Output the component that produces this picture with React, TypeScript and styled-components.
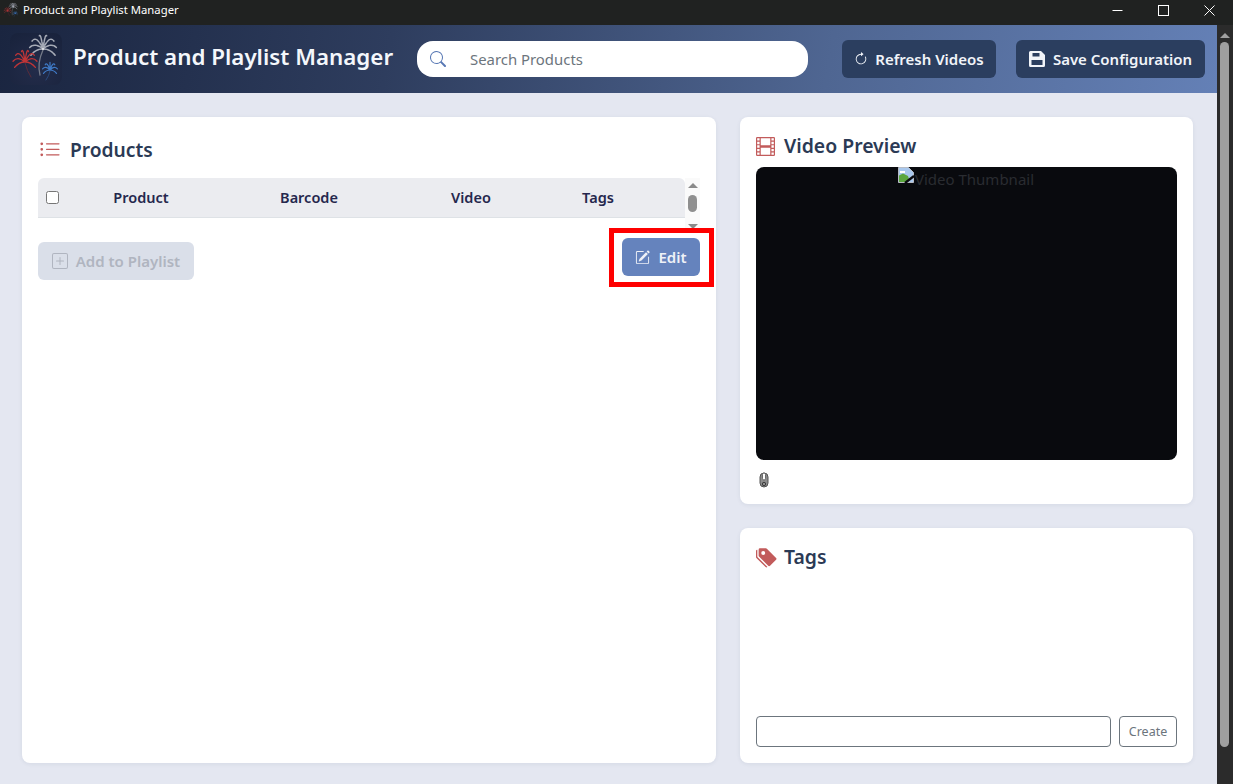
import { FC } from "react";
import styled, { createGlobalStyle } from "styled-components";
import {
  BsArrowClockwise,
  BsFilm,
  BsListUl,
  BsPencilSquare,
  BsPlusSquare,
  BsSearch,
  BsTagsFill,
} from "react-icons/bs";

const FONT = `"Noto Sans", "Open Sans", "Liberation Sans", sans-serif`;

const GlobalStyle = createGlobalStyle`
  html, body {
    margin: 0;
    padding: 0;
    height: 100%;
    overflow: hidden;
    background: #e4e7f1;
    font-family: ${FONT};
  }
  * {
    box-sizing: border-box;
  }
`;

const Window = styled.div`
  width: 1233px;
  height: 784px;
  display: flex;
  flex-direction: column;
  overflow: hidden;
`;

const TitleBar = styled.div`
  height: 25px;
  flex: none;
  background: #202221;
  display: flex;
  align-items: center;
  padding: 0 1px 5px 3px;
  color: #ffffff;
`;

const TitleText = styled.span`
  margin-left: 4px;
  font-size: 11.3px;
  line-height: 20px;
  flex: 1;
`;

const WindowButton = styled.div`
  width: 46px;
  height: 20px;
  display: flex;
  align-items: center;
  justify-content: center;
`;

const Body = styled.div`
  flex: 1;
  min-height: 0;
  display: flex;
`;

const Page = styled.div`
  width: 1217px;
  display: flex;
  flex-direction: column;
`;

const Header = styled.header`
  height: 68px;
  flex: none;
  background: linear-gradient(100deg, #1a2540 0%, #2e3d5e 32%, #4f6692 68%, #6480b6 100%);
  display: flex;
  align-items: center;
  padding: 0 12px 0 10px;
`;

const LogoBox = styled.div`
  width: 52px;
  height: 52px;
  flex: none;
  border-radius: 8px;
  background: radial-gradient(circle at 50% 70%, #232c4a, #18223b);
  display: flex;
  align-items: center;
  justify-content: center;
`;

const AppTitle = styled.h1`
  margin: 0 0 5px 11px;
  width: 344px;
  flex: none;
  font-size: 22.35px;
  font-weight: 600;
  color: #f4f7fb;
  white-space: nowrap;
`;

const SearchBox = styled.div`
  width: 391px;
  height: 36px;
  flex: none;
  border-radius: 16px;
  background: #ffffff;
  display: flex;
  align-items: center;
  padding-left: 13px;
  color: #5878b4;
`;

const SearchLabel = styled.span`
  margin-left: 24px;
  font-size: 14.9px;
  color: #6c757d;
`;

const HeaderButton = styled.button<{ $left: number; $width: number; $gap: number }>`
  margin-left: ${({ $left }) => $left}px;
  width: ${({ $width }) => $width}px;
  height: 38px;
  flex: none;
  border: none;
  border-radius: 6px;
  background: #2b3e5f;
  color: #f1f4f9;
  font-family: ${FONT};
  font-size: 15px;
  font-weight: 600;
  display: flex;
  align-items: center;
  justify-content: center;
  gap: ${({ $gap }) => $gap}px;
  padding: 0;
  white-space: nowrap;
`;

const Main = styled.main`
  flex: 1;
  min-height: 0;
  background: #e4e7f1;
  padding: 24px 24px 21px 22px;
  display: grid;
  grid-template-columns: 694px 453px;
  column-gap: 24px;
`;

const Card = styled.section`
  background: #ffffff;
  border-radius: 8px;
  box-shadow: 0 1px 4px rgba(44, 62, 95, 0.08);
  padding: 16px;
  min-height: 0;
`;

const ProductsCard = styled(Card)`
  padding-top: 20px;
`;

const SideColumn = styled.div`
  display: grid;
  grid-template-rows: 387px 235px;
  row-gap: 24px;
`;

const SectionTitle = styled.h2<{ $gap?: number }>`
  margin: 0;
  height: 26px;
  font-size: 19.4px;
  font-weight: 600;
  line-height: 26px;
  color: #2b3a55;
  display: flex;
  align-items: center;
  gap: ${({ $gap }) => $gap ?? 9}px;
  svg {
    color: #c25b5b;
    flex: none;
  }
`;

const ProductsTitle = styled(SectionTitle)`
  margin-left: 1px;
  font-size: 19.2px;
`;

const TableRow = styled.div`
  margin-top: 15px;
  display: flex;
  height: 54px;
`;

const TableHead = styled.div`
  width: 647px;
  height: 40px;
  background: #ebecf0;
  border-bottom: 1px solid #dee2e6;
  border-radius: 6px 6px 0 0;
  padding-bottom: 2px;
  display: grid;
  grid-template-columns: 57px 92px 244px 80px 174px;
  align-items: center;
  font-size: 14.5px;
  font-weight: 600;
  color: #25274d;
  text-align: center;
`;

const HeadCheck = styled.div`
  display: flex;
  padding: 2px 0 0 8px;
  input {
    margin: 0;
    width: 13px;
    height: 13px;
  }
`;

const ScrollColumn = styled.div`
  width: 15px;
  background: #fafafa;
  display: flex;
  flex-direction: column;
  align-items: center;
  justify-content: space-between;
  padding: 5px 0 3px;
`;

const ScrollThumb = styled.div`
  width: 9px;
  height: 17px;
  margin-bottom: 5px;
  border-radius: 5px;
  background: #8f8f8f;
`;

const Arrow = styled.div<{ $down?: boolean; $color: string }>`
  width: 0;
  height: 0;
  border-left: 5px solid transparent;
  border-right: 5px solid transparent;
  ${({ $down, $color }) =>
    $down ? `border-top: 5px solid ${$color};` : `border-bottom: 5px solid ${$color};`}
`;

const Actions = styled.div`
  display: flex;
  justify-content: space-between;
  align-items: flex-start;
  margin-top: 6px;
`;

const AddButton = styled.button`
  margin-top: 4px;
  width: 156px;
  height: 38px;
  border: none;
  border-radius: 6px;
  background: #dadfe9;
  color: #b0b5c0;
  font-family: ${FONT};
  font-size: 15px;
  font-weight: 600;
  display: flex;
  align-items: center;
  justify-content: center;
  gap: 8px;
  padding: 0;
`;

const EditButton = styled.button`
  position: relative;
  width: 78px;
  height: 38px;
  border: none;
  border-radius: 6px;
  background: #6583bd;
  color: #eef1f7;
  font-family: ${FONT};
  font-size: 15px;
  font-weight: 600;
  display: flex;
  align-items: center;
  justify-content: center;
  gap: 8px;
  padding: 0;
  &::after {
    content: "";
    position: absolute;
    left: -13px;
    right: -14px;
    top: -10px;
    bottom: -11px;
    border: 5px solid #fe0000;
  }
`;

const VideoFrame = styled.div`
  margin-top: 8px;
  height: 293px;
  border-radius: 8px;
  background: #090a0e;
  display: flex;
  justify-content: center;
  align-items: flex-start;
  font-size: 15px;
  line-height: 24px;
  color: #2a2c31;
`;

const BrokenImage = styled.svg`
  flex: none;
  margin: 0 1px 0 -1px;
`;

const ClipRow = styled.div`
  margin-top: 11px;
  margin-left: 3px;
  height: 18px;
`;

const TagsCard = styled(Card)`
  display: flex;
  flex-direction: column;
  padding-bottom: 16px;
`;

const TagsList = styled.div`
  flex: 1;
`;

const TagForm = styled.div`
  display: flex;
  gap: 8px;
`;

const TagInput = styled.input`
  width: 355px;
  height: 31px;
  border: 1px solid #6c757d;
  border-radius: 4px;
  background: #ffffff;
  padding: 0 8px;
`;

const CreateButton = styled.button`
  width: 58px;
  height: 31px;
  border: 1px solid #6c757d;
  border-radius: 4px;
  background: #ffffff;
  color: #6c757d;
  font-family: ${FONT};
  font-size: 12.5px;
  padding: 0;
`;

const WindowScrollbar = styled.div`
  width: 16px;
  background: #2b2b2b;
  padding: 8px 4px 0 3px;
  display: flex;
  flex-direction: column;
  align-items: center;
`;

const WindowThumb = styled.div`
  margin-top: 4px;
  width: 9px;
  height: 705px;
  border-radius: 5px;
  background: #9f9f9f;
`;

const rays = (cx: number, cy: number, len: number, n: number, from: number, to: number) =>
  Array.from({ length: n }, (_, i) => {
    const a = ((from + ((to - from) * i) / (n - 1)) * Math.PI) / 180;
    const ex = cx + Math.cos(a) * len;
    const ey = cy + Math.sin(a) * len * 0.9;
    const qx = cx + Math.cos(a) * len * 0.6;
    const qy = cy + Math.sin(a) * len * 0.9 - len * 0.45;
    return `M${cx} ${cy}Q${qx.toFixed(1)} ${qy.toFixed(1)} ${ex.toFixed(1)} ${ey.toFixed(1)}`;
  }).join("");

const Fireworks: FC<{ size: number }> = ({ size }) => (
  <svg width={size} height={size} viewBox="0 0 52 52" fill="none" strokeLinecap="round">
    <path d={rays(33, 16, 14, 8, 150, 390)} stroke="#a6abb6" strokeWidth="1.5" strokeDasharray="3 1" />
    <path d="M33 17Q27 30 30 42" stroke="#747a88" strokeWidth="1.3" />
    <path d={rays(15, 29, 12, 8, 150, 390)} stroke="#bf3537" strokeWidth="1.3" />
    <path d="M15 30Q17 38 21 44" stroke="#5d2c3a" strokeWidth="1" />
    <path d={rays(40, 37, 7.5, 7, 150, 390)} stroke="#3f7ac6" strokeWidth="1.2" />
    <path d="M40 38Q39 43 36 47" stroke="#2b4a7c" strokeWidth="1" />
    <circle cx="33" cy="16" r="1.1" fill="#e8eaee" />
  </svg>
);

const Floppy: FC = () => (
  <svg width="16" height="16" viewBox="0 0 16 16">
    <path
      fillRule="evenodd"
      fill="currentColor"
      d="M1.5 0H12L16 4V14.5A1.5 1.5 0 0 1 14.5 16H1.5A1.5 1.5 0 0 1 0 14.5V1.5A1.5 1.5 0 0 1 1.5 0ZM3.5 2V5.5H10.5V2ZM2.5 9V14H13.5V9Z"
    />
  </svg>
);

const Paperclip: FC = () => (
  <svg width="10" height="16" viewBox="0 0 10 16">
    <rect x="1" y="1" width="8" height="14" rx="4" fill="#8d8d8d" stroke="#555" strokeWidth="1" />
    <rect x="3.5" y="1" width="3" height="7" rx="1.5" fill="#fff" stroke="#555" strokeWidth="0.8" />
    <circle cx="5" cy="12" r="1.7" fill="none" stroke="#333" strokeWidth="0.9" />
  </svg>
);

const App: FC = () => {
  return (
    <Window>
      <GlobalStyle />
      <TitleBar>
        <Fireworks size={16} />
        <TitleText>Product and Playlist Manager</TitleText>
        <WindowButton>
          <svg width="11" height="11" viewBox="0 0 11 11">
            <path d="M0.5 5.5H10.5" stroke="#fff" />
          </svg>
        </WindowButton>
        <WindowButton>
          <svg width="11" height="11" viewBox="0 0 11 11">
            <rect x="0.5" y="0.5" width="10" height="10" fill="none" stroke="#fff" />
          </svg>
        </WindowButton>
        <WindowButton>
          <svg width="11" height="11" viewBox="0 0 11 11">
            <path d="M0.5 0.5L10.5 10.5M10.5 0.5L0.5 10.5" stroke="#fff" />
          </svg>
        </WindowButton>
      </TitleBar>
      <Body>
        <Page>
          <Header>
            <LogoBox>
              <Fireworks size={52} />
            </LogoBox>
            <AppTitle>Product and Playlist Manager</AppTitle>
            <SearchBox>
              <BsSearch size={16} />
              <SearchLabel>Search Products</SearchLabel>
            </SearchBox>
            <HeaderButton $left={34} $width={154} $gap={7}>
              <BsArrowClockwise size={14} />
              Refresh Videos
            </HeaderButton>
            <HeaderButton $left={20} $width={189} $gap={8}>
              <Floppy />
              Save Configuration
            </HeaderButton>
          </Header>
          <Main>
            <ProductsCard>
              <ProductsTitle>
                <BsListUl size={22} />
                Products
              </ProductsTitle>
              <TableRow>
                <TableHead>
                  <HeadCheck>
                    <input type="checkbox" />
                  </HeadCheck>
                  <span>Product</span>
                  <span>Barcode</span>
                  <span>Video</span>
                  <span>Tags</span>
                </TableHead>
                <ScrollColumn>
                  <Arrow $color="#8a8a8a" />
                  <ScrollThumb />
                  <Arrow $down $color="#8a8a8a" />
                </ScrollColumn>
              </TableRow>
              <Actions>
                <AddButton>
                  <BsPlusSquare size={16} />
                  Add to Playlist
                </AddButton>
                <EditButton>
                  <BsPencilSquare size={15} />
                  Edit
                </EditButton>
              </Actions>
            </ProductsCard>
            <SideColumn>
              <Card>
                <SectionTitle>
                  <BsFilm size={19} />
                  Video Preview
                </SectionTitle>
                <VideoFrame>
                  <BrokenImage width="16" height="16" viewBox="0 0 16 16">
                    <path d="M0.5 0.5H10.5L15.5 5.5V15.5H0.5Z" fill="#a9c8ee" stroke="#b8bcc4" />
                    <path d="M2 4H7V6H2Z" fill="#ffffff" />
                    <path d="M1 15V8.5L5 6.5L10 9L11 12L8 15Z" fill="#5aa63e" />
                    <path d="M7 16L16 9" stroke="#0a0a0e" strokeWidth="2.4" />
                  </BrokenImage>
                  <span>Video Thumbnail</span>
                </VideoFrame>
                <ClipRow>
                  <Paperclip />
                </ClipRow>
              </Card>
              <TagsCard>
                <SectionTitle $gap={7}>
                  <BsTagsFill size={21} />
                  Tags
                </SectionTitle>
                <TagsList />
                <TagForm>
                  <TagInput />
                  <CreateButton>Create</CreateButton>
                </TagForm>
              </TagsCard>
            </SideColumn>
          </Main>
        </Page>
        <WindowScrollbar>
          <Arrow $color="#9f9f9f" />
          <WindowThumb />
        </WindowScrollbar>
      </Body>
    </Window>
  );
};

export default App;
